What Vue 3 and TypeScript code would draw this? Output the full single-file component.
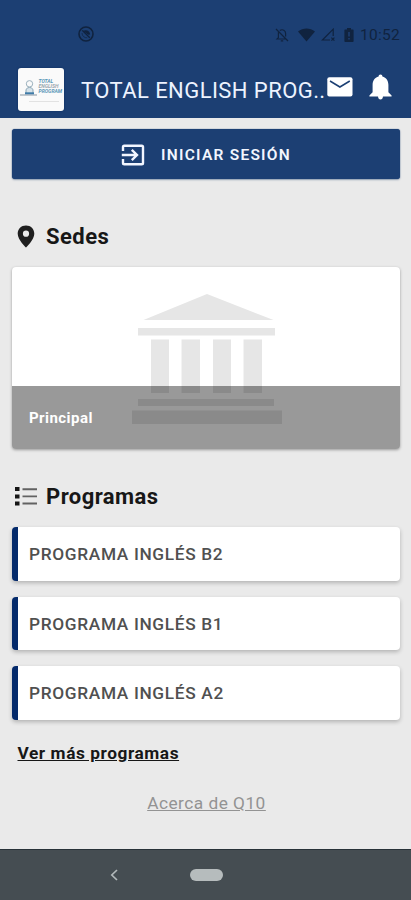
<script setup lang="ts">
interface Program {
  id: number
  name: string
}

const title = 'TOTAL ENGLISH PROG..'
const programs: Program[] = [
  { id: 1, name: 'PROGRAMA INGLÉS B2' },
  { id: 2, name: 'PROGRAMA INGLÉS B1' },
  { id: 3, name: 'PROGRAMA INGLÉS A2' },
]
</script>

<template>
  <div class="screen">
    <header class="header">
      <div class="status">
        <svg class="dnd" width="16" height="16" viewBox="0 0 16 16">
          <circle cx="8" cy="8" r="7" fill="none" stroke="currentColor" stroke-width="1.6" />
          <path d="M4.2 4.4 L11.8 11.8" stroke="currentColor" stroke-width="1.3" />
          <path d="M5 4.8 C8.5 3 12.2 5 12.2 8.6 L10.2 8.8 Z" fill="currentColor" />
          <path d="M4 7 C4 10 6.5 12 9.2 11.8" fill="none" stroke="currentColor" stroke-width="1" opacity=".7" />
        </svg>
        <div class="status-right">
          <svg class="mute" width="14" height="14" viewBox="0 0 14 14" fill="none" stroke="currentColor" stroke-width="1.2">
            <path d="M1 1 L13 13 M3.4 4.2 V9.6 L2 11 H10.6 M4.8 2.6 C7.6 .6 10.6 2.6 10.6 5.4 V8.4 M5.8 12.8 H8.2" />
          </svg>
          <svg class="wifi" width="17" height="14" viewBox="0 0 17 14">
            <path d="M0 3.600 C5 -.6 12 -.6 17 3.600 L8.500 13.600 Z" fill="currentColor" />
          </svg>
          <svg class="signal" width="14" height="13" viewBox="0 0 14 13" fill="none" stroke="currentColor" stroke-width="1.2">
            <path d="M12.200 8 V1.200 L1.400 12 H9 M10.400 9.600 L13.400 12.600 M13.400 9.600 L10.400 12.600" />
          </svg>
          <svg class="battery" width="10" height="14" viewBox="0 0 10 14">
            <path d="M3 0 H7 V1.500 H9 Q9.600 1.500 9.600 2.300 V13 Q9.600 14 8.800 14 H1.200 Q.4 14 .4 13 V2.300 Q.4 1.500 1 1.500 H3Z" fill="currentColor" />
            <path d="M5 4 V8.600 M5 10 V11.600" stroke="#1c3f73" stroke-width="1.5" />
          </svg>
          <span class="clock">10:52</span>
        </div>
      </div>
      <div class="appbar">
        <div class="logo">
          <svg class="logo-mark" width="18" height="18" viewBox="0 0 18 18" fill="none">
            <circle cx="9.500" cy="4.800" r="3.200" stroke="#9db2be" stroke-width="1" />
            <path d="M6 14 V10.400 Q9.500 6.400 13 10.400 V14" fill="#d7e3ea" stroke="#8aa5b5" />
            <path d="M0 16 H17" stroke="#8795a1" />
            <path d="M5 14.300 H14" stroke="#3f7ba8" stroke-width="2" />
          </svg>
          <div class="logo-text">
            <span class="blue">TOTAL</span><span>ENGLISH</span><span class="blue">PROGRAM</span>
          </div>
          <i class="logo-line"></i>
        </div>
        <h1 class="title">{{ title }}</h1>
        <svg class="mail" width="26" height="20" viewBox="0 0 26 20">
          <rect x=".3" y=".3" width="25.200" height="19.200" rx="2" fill="#fff" />
          <path d="M3 4 L12.900 10 L22.800 4" fill="none" stroke="#1c3f73" stroke-width="1.5" />
        </svg>
        <svg class="bell" width="23" height="26" viewBox="0 0 23 26">
          <path d="M11.500 .4 C12.700 .4 13.400 1.200 13.400 2.600 C17.300 3.700 19.400 7 19.400 11 V18.300 L22.600 21.500 V22.600 H.4 V21.500 L3.600 18.300 V11 C3.600 7 5.700 3.700 9.600 2.600 C9.600 1.200 10.300 .4 11.500 .4Z M9 22.600 H14 Q13.700 25.600 11.500 25.600 Q9.300 25.600 9 22.600Z" fill="#fff" />
        </svg>
      </div>
    </header>

    <main class="content">
      <button class="login" type="button">
        <svg width="24" height="22" viewBox="0 0 24 22" fill="none" stroke="#f2f6ff" stroke-width="2.4">
          <path d="M2 7 V3 Q2 1.700 3.300 1.700 H20.700 Q22 1.700 22 3 V19 Q22 20.300 20.700 20.300 H3.300 Q2 20.300 2 19 V15" />
          <path d="M.8 11 H15.800 M10.800 5.900 L16 11 L10.800 16.100" />
        </svg>
        <span>INICIAR SESIÓN</span>
      </button>

      <h2 class="heading sedes">
        <svg class="pin" width="18" height="23" viewBox="0 0 18 23">
          <path d="M9 .4 C4.200 .4 .7 3.900 .7 8.700 C.7 14.600 9 22.600 9 22.600 S17.300 14.600 17.300 8.700 C17.300 3.900 13.800 .4 9 .4Z M9 5.600 A3.100 3.100 0 1 1 9 11.800 A3.100 3.100 0 1 1 9 5.600Z" fill="#1f1f1f" fill-rule="evenodd" />
        </svg>
        <span>Sedes</span>
      </h2>

      <section class="campus">
        <svg class="building" width="150" height="130" viewBox="0 0 150 130" fill="#e6e6e6">
          <path d="M75 0 L141.500 26 H11.500Z M6 34 H143 V41.500 H6Z M19 45.500 H37 V99 H19Z M49.500 45.500 H68 V99 H49.500Z M81 45.500 H99 V99 H81Z M111.500 45.500 H130 V99 H111.500Z M6 105 H142 V112 H6Z M0 116.500 H150 V130 H0Z" />
        </svg>
        <div class="caption"><span>Principal</span></div>
      </section>

      <h2 class="heading programas">
        <svg class="list" width="22" height="19" viewBox="0 0 22 19">
          <path d="M0 0 H4.500 V4 H0Z M0 7.400 H4.500 V11.400 H0Z M0 14.600 H4.500 V18.600 H0Z" fill="#151515" />
          <path d="M7.500 2.300 H22 M7.500 9.400 H22 M7.500 16.500 H22" stroke="#626262" stroke-width="1.9" />
        </svg>
        <span>Programas</span>
      </h2>

      <ul class="programs">
        <li v-for="program in programs" :key="program.id"><span>{{ program.name }}</span></li>
      </ul>

      <a class="more">Ver más programas</a>
      <a class="about">Acerca de Q10</a>
    </main>

    <nav class="navbar">
      <svg class="back" width="8" height="12" viewBox="0 0 8 12">
        <path d="M7 1 L1.800 6 L7 11" fill="none" stroke="#b1b8ba" stroke-width="1.7" />
      </svg>
      <i class="home"></i>
    </nav>
  </div>
</template>

<style>
body {
  margin: 0;
}
</style>

<style scoped>
.screen {
  box-sizing: border-box;
  width: 411px;
  height: 900px;
  display: flex;
  flex-direction: column;
  overflow: hidden;
  background: #eaeaea;
  font-family: Roboto, "Liberation Sans", sans-serif;
}
.header {
  flex: none;
  height: 118px;
  background: #1c3f73;
}
.status {
  height: 62px;
  box-sizing: border-box;
  padding: 7px 10px 0 78px;
  display: flex;
  align-items: center;
  justify-content: space-between;
  color: #10233f;
}
.dnd {
  margin-top: -1px;
}
.status-right {
  display: flex;
  align-items: center;
}
.wifi {
  margin-left: 9px;
}
.signal {
  margin-left: 6px;
}
.battery {
  margin-left: 9px;
}
.clock {
  margin-left: 6px;
  width: 41px;
  font-size: 15.500px;
  line-height: 18px;
  letter-spacing: 0.300px;
  white-space: nowrap;
}
.appbar {
  height: 56px;
  display: flex;
  align-items: flex-start;
}
.logo {
  box-sizing: border-box;
  flex: none;
  width: 46px;
  height: 43px;
  margin: 5.500px 0 0 17.500px;
  padding: 11px 2px 0 2px;
  display: flex;
  flex-wrap: wrap;
  align-content: flex-start;
  border-radius: 3px;
  background: #fafafa;
  box-shadow: 0 0 2px #0a2a60;
}
.logo-text {
  width: 23px;
  margin-left: 1px;
  display: flex;
  flex-direction: column;
  font-size: 5px;
  font-weight: 700;
  font-style: italic;
  line-height: 5px;
  color: #9ba8b0;
}
.logo-text .blue {
  color: #5b98b8;
}
.logo-line {
  width: 30px;
  height: 1px;
  margin: 4px 0 0 9px;
  background: #e2e2e2;
}
.title {
  flex: none;
  width: 246px;
  margin: 15px 0 0 17.500px;
  font-size: 22px;
  font-weight: 400;
  line-height: 28px;
  letter-spacing: 0.430px;
  white-space: nowrap;
  color: #edf3ff;
}
.mail {
  flex: none;
  margin: 15px 0 0 0;
}
.bell {
  flex: none;
  margin: 12px 0 0 16px;
}
.content {
  flex: 1;
  min-height: 0;
  display: flex;
  flex-direction: column;
  padding: 11px 11px 0 12px;
}
.login {
  flex: none;
  height: 50px;
  padding: 1px 0 0;
  display: flex;
  align-items: center;
  justify-content: center;
  gap: 16px;
  border: 0;
  border-radius: 3px;
  background: #1c3f73;
  box-shadow: 0 0 1px #1c3f73, 0 1px 2px #9aa6b8;
  color: #f2f6ff;
  font: 600 15.500px/20px Roboto, sans-serif;
  letter-spacing: 1.250px;
}
.heading {
  flex: none;
  margin: 0;
  display: flex;
  align-items: center;
  font-size: 22px;
  font-weight: 700;
  line-height: 28px;
  letter-spacing: 0.450px;
  color: #171717;
}
.sedes {
  margin-top: 44px;
}
.pin {
  margin: 0 11px 2px 5px;
}
.campus {
  flex: none;
  position: relative;
  height: 182px;
  margin-top: 16px;
  display: flex;
  justify-content: center;
  align-items: flex-start;
  overflow: hidden;
  border-radius: 4px;
  background: #fff;
  box-shadow: 0 1px 3px rgba(0, 0, 0, 0.35);
}
.building {
  margin: 27px 0 0 2px;
}
.caption {
  position: absolute;
  inset: 119px 0 0 0;
  padding: 1px 0 0 17px;
  display: flex;
  align-items: center;
  background: rgba(0, 0, 0, 0.4);
  color: #fff;
  font-size: 15px;
  font-weight: 700;
  letter-spacing: 0.450px;
}
.programas {
  margin-top: 34px;
}
.list {
  margin: 0 9px 2px 3px;
}
.programs {
  margin: 16px 0 0;
  padding: 0;
  display: flex;
  flex-direction: column;
  gap: 16px;
  list-style: none;
}
.programs li {
  box-sizing: border-box;
  height: 53.700px;
  padding-left: 11px;
  display: flex;
  align-items: center;
  border-left: 6px solid #042a6b;
  border-radius: 4px;
  background: #fff;
  box-shadow: 0 2px 4px rgba(0, 0, 0, 0.24);
  color: #505050;
  font-size: 17.300px;
  font-weight: 500;
  letter-spacing: 0.660px;
}
.more {
  align-self: flex-start;
  margin: 22px 0 0 5.500px;
  color: #171717;
  font-size: 17.300px;
  font-weight: 700;
  line-height: 22px;
  letter-spacing: 0.560px;
  text-decoration: underline;
}
.about {
  align-self: center;
  margin: 28px 0 0 1px;
  color: #939393;
  font-size: 17.300px;
  line-height: 22px;
  letter-spacing: 0.480px;
  text-decoration: underline;
}
.navbar {
  flex: none;
  box-sizing: border-box;
  height: 51px;
  padding-left: 110px;
  display: flex;
  align-items: center;
  border-top: 1.500px solid #283238;
  background: #454d52;
}
.home {
  width: 33px;
  height: 12px;
  margin-left: 72px;
  border-radius: 6px;
  background: #b6bcbd;
}
</style>
